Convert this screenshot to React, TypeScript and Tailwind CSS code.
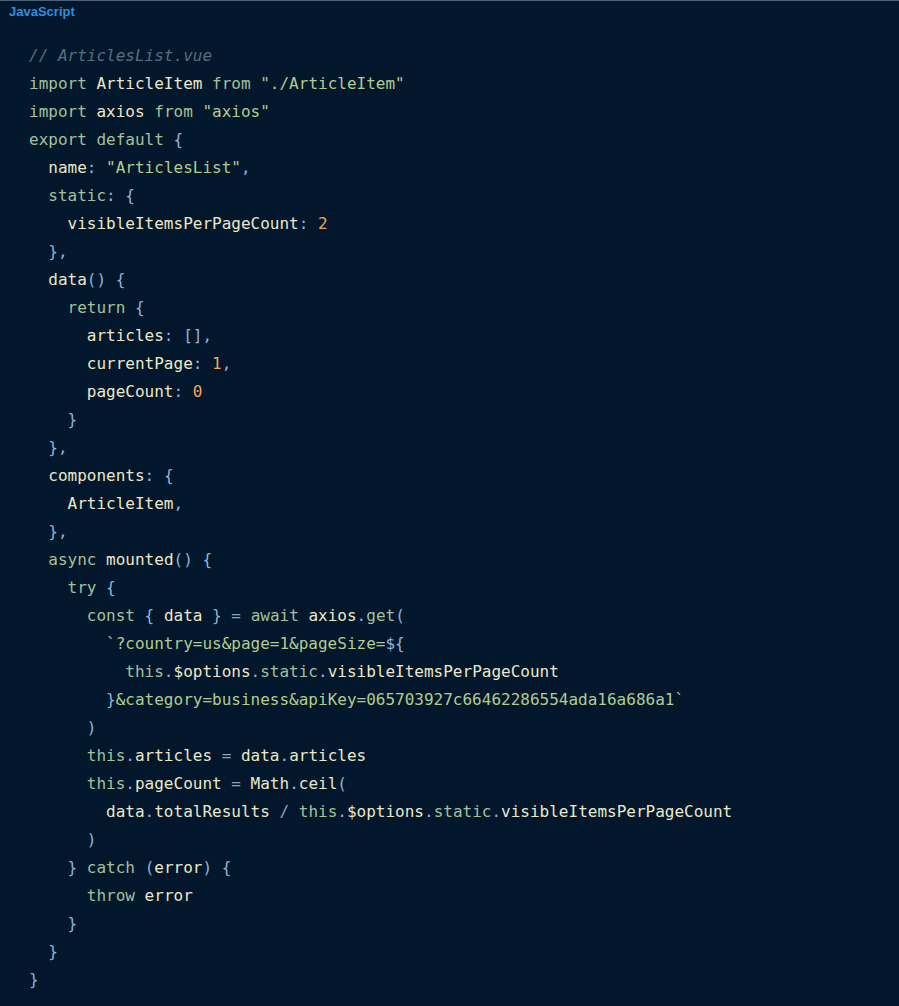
import React from 'react';

type Tok = [string, string];

// token colours
const C: Record<string, string> = {
  k: 'text-[#a3c19a]',
  i: 'text-[#ece7c8]',
  s: 'text-[#b1cc8f]',
  p: 'text-[#8cb4dc]',
  n: 'text-[#f5a25d]',
  c: 'text-[#53707d] italic',
  o: 'text-[#8fa3b3]',
  w: '',
};

const lines: Tok[][] = [
  [['c', '// ArticlesList.vue']],
  [['k', 'import'], ['w', ' '], ['i', 'ArticleItem'], ['w', ' '], ['k', 'from'], ['w', ' '], ['s', '"./ArticleItem"']],
  [['k', 'import'], ['w', ' '], ['i', 'axios'], ['w', ' '], ['k', 'from'], ['w', ' '], ['s', '"axios"']],
  [['k', 'export default'], ['w', ' '], ['p', '{']],
  [['w', '  '], ['i', 'name'], ['p', ':'], ['w', ' '], ['s', '"ArticlesList"'], ['p', ',']],
  [['w', '  '], ['k', 'static'], ['p', ':'], ['w', ' '], ['p', '{']],
  [['w', '    '], ['i', 'visibleItemsPerPageCount'], ['p', ':'], ['w', ' '], ['n', '2']],
  [['w', '  '], ['p', '},']],
  [['w', '  '], ['i', 'data'], ['p', '()'], ['w', ' '], ['p', '{']],
  [['w', '    '], ['k', 'return'], ['w', ' '], ['p', '{']],
  [['w', '      '], ['i', 'articles'], ['p', ':'], ['w', ' '], ['p', '[],']],
  [['w', '      '], ['i', 'currentPage'], ['p', ':'], ['w', ' '], ['n', '1'], ['p', ',']],
  [['w', '      '], ['i', 'pageCount'], ['p', ':'], ['w', ' '], ['n', '0']],
  [['w', '    '], ['p', '}']],
  [['w', '  '], ['p', '},']],
  [['w', '  '], ['i', 'components'], ['p', ':'], ['w', ' '], ['p', '{']],
  [['w', '    '], ['i', 'ArticleItem'], ['p', ',']],
  [['w', '  '], ['p', '},']],
  [['w', '  '], ['k', 'async'], ['w', ' '], ['i', 'mounted'], ['p', '()'], ['w', ' '], ['p', '{']],
  [['w', '    '], ['k', 'try'], ['w', ' '], ['p', '{']],
  [['w', '      '], ['k', 'const'], ['w', ' '], ['p', '{'], ['w', ' '], ['i', 'data'], ['w', ' '], ['p', '}'], ['w', ' '], ['o', '='], ['w', ' '], ['k', 'await'], ['w', ' '], ['i', 'axios'], ['p', '.'], ['k', 'get'], ['p', '(']],
  [['w', '        '], ['s', '`?country=us&page=1&pageSize='], ['p', '${']],
  [['w', '          '], ['k', 'this'], ['p', '.'], ['i', '$options'], ['p', '.'], ['k', 'static'], ['p', '.'], ['i', 'visibleItemsPerPageCount']],
  [['w', '        '], ['p', '}'], ['s', '&category=business&apiKey=065703927c66462286554ada16a686a1`']],
  [['w', '      '], ['p', ')']],
  [['w', '      '], ['k', 'this'], ['p', '.'], ['i', 'articles'], ['w', ' '], ['o', '='], ['w', ' '], ['i', 'data'], ['p', '.'], ['i', 'articles']],
  [['w', '      '], ['k', 'this'], ['p', '.'], ['i', 'pageCount'], ['w', ' '], ['o', '='], ['w', ' '], ['i', 'Math'], ['p', '.'], ['i', 'ceil'], ['p', '(']],
  [['w', '        '], ['i', 'data'], ['p', '.'], ['i', 'totalResults'], ['w', ' '], ['o', '/'], ['w', ' '], ['k', 'this'], ['p', '.'], ['i', '$options'], ['p', '.'], ['k', 'static'], ['p', '.'], ['i', 'visibleItemsPerPageCount']],
  [['w', '      '], ['p', ')']],
  [['w', '    '], ['p', '}'], ['w', ' '], ['k', 'catch'], ['w', ' '], ['p', '('], ['i', 'error'], ['p', ')'], ['w', ' '], ['p', '{']],
  [['w', '      '], ['k', 'throw'], ['w', ' '], ['i', 'error']],
  [['w', '    '], ['p', '}']],
  [['w', '  '], ['p', '}']],
  [['p', '}']],
];

const App = () => {
  return (
    <div className="min-h-screen w-full bg-[#02172b] border-t border-[#4a6178]">
      {/* Header */}
      <div className="h-[21px] flex items-center px-[9px]">
        <span className="text-[13px] font-bold text-[#2e8fe0] font-['Liberation_Sans',sans-serif]">
          JavaScript
        </span>
      </div>

      {/* Code */}
      <pre className="pt-[20px] pl-[29px] pb-6 font-['DejaVu_Sans_Mono',monospace] text-[16px] leading-[28px]">
        {lines.map((line, li) => (
          <div key={li} className="whitespace-pre">
            {line.map(([t, text], ti) => (
              <span key={ti} className={C[t]}>
                {text}
              </span>
            ))}
          </div>
        ))}
      </pre>
    </div>
  );
};

export default App;
